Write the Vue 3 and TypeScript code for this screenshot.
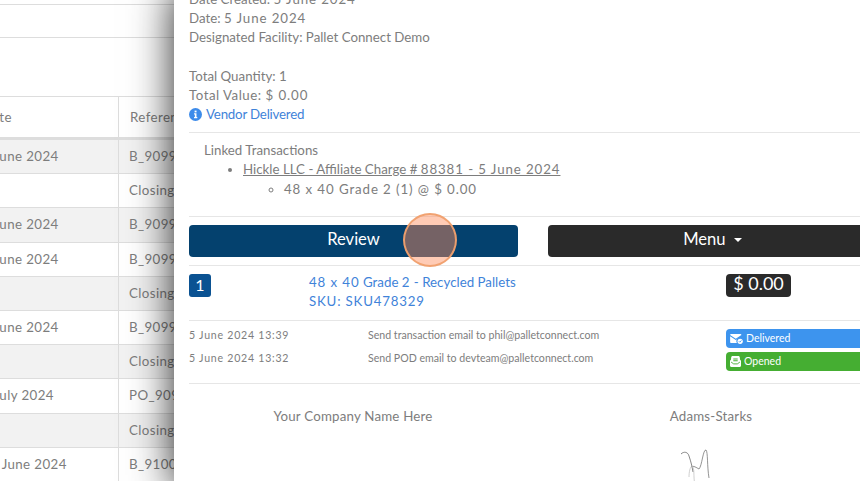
<script setup lang="ts">
interface Row { date: string; ref: string }
const rows: Row[] = [
  { date: '5 June 2024', ref: 'B_90991' },
  { date: '', ref: 'Closing' },
  { date: '5 June 2024', ref: 'B_90992' },
  { date: '5 June 2024', ref: 'B_90993' },
  { date: '', ref: 'Closing' },
  { date: '5 June 2024', ref: 'B_90994' },
  { date: '', ref: 'Closing' },
  { date: '5 July 2024', ref: 'PO_9095' },
  { date: '', ref: 'Closing' },
  { date: '26 June 2024', ref: 'B_91001' },
]
</script>

<template>
  <div class="page">
    <section class="back">
      <div class="top-line first"></div>
      <div class="top-line second"></div>
      <table class="grid">
        <thead>
          <tr><th class="c1">Date</th><th class="c2">Reference</th></tr>
        </thead>
        <tbody>
          <tr v-for="(r, i) in rows" :key="i" :class="{ odd: i === 0 || i === 2 || i === 4 || i === 6 || i === 8 }">
            <td class="c1">{{ r.date }}</td><td class="c2">{{ r.ref }}</td>
          </tr>
        </tbody>
      </table>
    </section>

    <aside class="panel">
      <div class="meta">
        <div>Date Created: <span class="num">5 June 2024</span></div>
        <div>Date: <span class="num">5 June 2024</span></div>
        <div>Designated Facility: Pallet Connect Demo</div>
        <div class="gap">Total Quantity: <span class="num">1</span></div>
        <div class="wide">Total Value: <span class="num">$ 0.00</span></div>
        <div class="vendor">
          <svg class="info" viewBox="0 0 16 16" width="13" height="13">
            <circle cx="8" cy="8" r="8" fill="#3d8bea" />
            <rect x="6.9" y="3.2" width="2.4" height="2.2" fill="#fff" />
            <path d="M6.2 6.6h3v4.6h1v1.3H6.2v-1.3h1v-3.3h-1z" fill="#fff" />
          </svg>
          <span>Vendor Delivered</span>
        </div>
      </div>
      <div class="linked">
        <div class="linked-title">Linked Transactions</div>
        <ul class="l1">
          <li>
            <u>Hickle LLC - Affiliate Charge # <span class="num">88381 - 5 June 2024</span></u>
            <ul class="l2"><li class="num">48 x 40 Grade 2 (1) @ $ 0.00</li></ul>
          </li>
        </ul>
      </div>
      <div class="actions">
        <button class="btn review">Review</button>
        <button class="btn menu">Menu <i class="caret"></i></button>
      </div>
      <div class="item">
        <span class="qty">1</span>
        <div class="item-name"><span class="num">48 x 40</span> Grade <span class="num">2</span> - Recycled Pallets<br /><span class="sku">SKU: SKU478329</span></div>
        <span class="price">$ 0.00</span>
      </div>
      <div class="log">
        <div class="log-row">
          <span class="when">5 June 2024 13:39</span>
          <span class="what">Send transaction email to phil@palletconnect.com</span>
          <span class="tag blue">
            <svg viewBox="0 0 14 11" width="13" height="10">
              <path d="M0 1.2C0 .5.5 0 1.2 0h10c.7 0 1.2.5 1.2 1.2L6.2 5.2z" fill="#fff" />
              <path d="M0 2.6l6.2 4 3.3-2.1A3.6 3.6 0 0 0 7.4 10H1.2C.5 10 0 9.5 0 8.8z" fill="#fff" />
              <circle cx="11" cy="8" r="2.9" fill="#fff" />
              <path d="M9.6 8l1 1 1.8-1.9" stroke="#3d94ee" stroke-width="1" fill="none" />
            </svg>
            Delivered
          </span>
        </div>
        <div class="log-row">
          <span class="when">5 June 2024 13:32</span>
          <span class="what">Send POD email to devteam@palletconnect.com</span>
          <span class="tag green">
            <svg viewBox="0 0 12 12" width="11" height="11">
              <path d="M3 0h6c1 0 1.6.6 1.7 1.5L11 4l.6.6c.3.3.4.6.4 1v4.7c0 1-.7 1.7-1.7 1.7H1.700C.7 12 0 11.3 0 10.3V5.600c0-.4.1-.7.4-1L1 4l.3-2.500C1.400.6 2 0 3 0z" fill="#fff" />
              <path d="M3.6 3.2h4.8M3.6 5.2h4.8" stroke="#45ae32" stroke-width="1.1" />
              <path d="M1.2 6.6L4 8.6h4l2.800-2" stroke="#45ae32" stroke-width="1" fill="none" />
            </svg>
            Opened
          </span>
        </div>
      </div>
      <div class="parties">
        <div class="party">Your Company Name Here</div>
        <div class="party">
          Adams-Starks
          <svg class="sign" viewBox="0 0 30 40" width="30" height="40">
            <path d="M1 7c3-3 7-2 8 2 2 6 3 10 4 16" stroke="#555" stroke-width=".7" fill="none" />
            <path d="M11 20c2-2 6 1 8 2 3-3 4-20 7-19 2 2 1 16 3 28" stroke="#666" stroke-width=".7" fill="none" />
            <path d="M9 30c0-5 1-10 3-11 3 2 1 10 3 20" stroke="#bbb" stroke-width=".7" fill="none" />
          </svg>
        </div>
      </div>
    </aside>

    <div class="touch"></div>
  </div>
</template>

<style>
html, body { margin: 0; padding: 0; background: #fff; }
</style>

<style scoped>
.page {
  position: relative;
  width: 860px;
  height: 481px;
  overflow: hidden;
  background: #fff;
  color: #7d7d7d;
  font-family: Lato, sans-serif;
  font-size: 13.3px;
}
.num { letter-spacing: 0.9px; }
.sku { letter-spacing: 0.8px; }
.wide { letter-spacing: 0.5px; }
.back { padding-top: 4px; }
.top-line { border-top: 1px solid #ddd; }
.first { margin-bottom: 32px; }
.second { margin-bottom: 58px; }
.grid {
  margin-left: -29px;
  width: 416px;
  border-collapse: collapse;
  table-layout: fixed;
  letter-spacing: 0.4px;
}
.grid th, .grid td {
  padding: 0 10px 1px;
  font-weight: 400;
  text-align: left;
  border: 1px solid #ddd;
  white-space: nowrap;
  overflow: hidden;
}
.grid th { height: 39px; border-bottom-width: 3px; }
.grid td { height: 32.2px; }
.c1 { width: 126px; }
.c2 { width: 250px; }
.grid th.c2 { padding-left: 11px; }
.odd { background: #f2f2f2; }

.panel {
  position: absolute;
  top: -11px;
  left: 174px;
  width: 720px;
  height: 500px;
  box-sizing: border-box;
  padding: 0 15px;
  background: #fff;
  box-shadow: 0 0 40px rgba(0, 0, 0, 0.85);
}
.meta { padding: 1px 0 8px; line-height: 19.2px; border-bottom: 1px solid #e6e6e6; }
.gap { margin-top: 19.2px; }
.vendor { color: #3f83d9; display: flex; align-items: center; gap: 4px; letter-spacing: -0.2px; }
.info { flex: none; }
.linked { padding: 8px 0 17px 15px; border-bottom: 1px solid #e6e6e6; line-height: 19.2px; }
.linked ul { margin: 0; }
.linked .l1 { margin-top: -1px; padding-left: 39px; list-style: disc; }
.linked .l2 { margin-top: 1px; padding-left: 41px; list-style: circle; }
.actions { display: flex; gap: 30px; padding: 8px 0; border-bottom: 1px solid #e6e6e6; }
.btn {
  flex: none;
  height: 32px;
  padding: 0 0 5px;
  border: 0;
  border-radius: 4px;
  color: #fff;
  font: 400 16.6px Lato, sans-serif;
}
.review { width: 329px; background: #04416e; }
.menu { width: 329px; background: #2a2a2a; }
.caret {
  display: inline-block;
  margin-left: 4px;
  vertical-align: middle;
  border-top: 4px solid #fff;
  border-left: 4px solid transparent;
  border-right: 4px solid transparent;
}
.item {
  display: flex;
  align-items: flex-start;
  height: 46px;
  padding: 8px 0 0;
  line-height: 19px;
  border-bottom: 1px solid #e6e6e6;
}
.qty {
  flex: none;
  width: 22px;
  height: 23px;
  line-height: 21px;
  text-align: center;
  background: #0b5292;
  color: #fff;
  border-radius: 3px;
  font-size: 16px;
}
.item-name { flex: none; margin: -1px 0 0 98px; width: 417px; color: #3f83d9; }
.price {
  flex: none;
  width: 65px;
  height: 23px;
  line-height: 18px;
  text-align: center;
  background: #2a2a2a;
  color: #fff;
  border-radius: 4px;
  font-size: 18px;
}
.log { padding: 8px 0 0; height: 54px; border-bottom: 1px solid #e6e6e6; }
.log-row { display: flex; height: 23px; font-size: 10.6px; line-height: 12px; }
.when { flex: none; width: 179px; letter-spacing: 0.75px; }
.what { flex: none; width: 358px; }
.tag {
  flex: none;
  width: 140px;
  height: 19px;
  box-sizing: border-box;
  padding: 0 0 0 4px;
  display: flex;
  align-items: center;
  gap: 3px;
  line-height: 19px;
  color: #fff;
  border-radius: 4px;
  font-size: 10.5px;
}
.blue { background: #3d94ee; }
.green { background: #45ae32; }
.parties { display: flex; gap: 30px; padding-top: 23px; line-height: 18px; letter-spacing: 0.2px; }
.party { flex: none; width: 328px; text-align: center; }
.sign { display: block; margin: 22px auto 0; transform: translateX(-16px); }
.touch {
  position: absolute;
  left: 403px;
  top: 213px;
  width: 54px;
  height: 54px;
  box-sizing: border-box;
  border-radius: 50%;
  background: rgba(255, 140, 90, 0.45);
  border: 2px solid rgba(240, 160, 110, 0.95);
}
</style>
